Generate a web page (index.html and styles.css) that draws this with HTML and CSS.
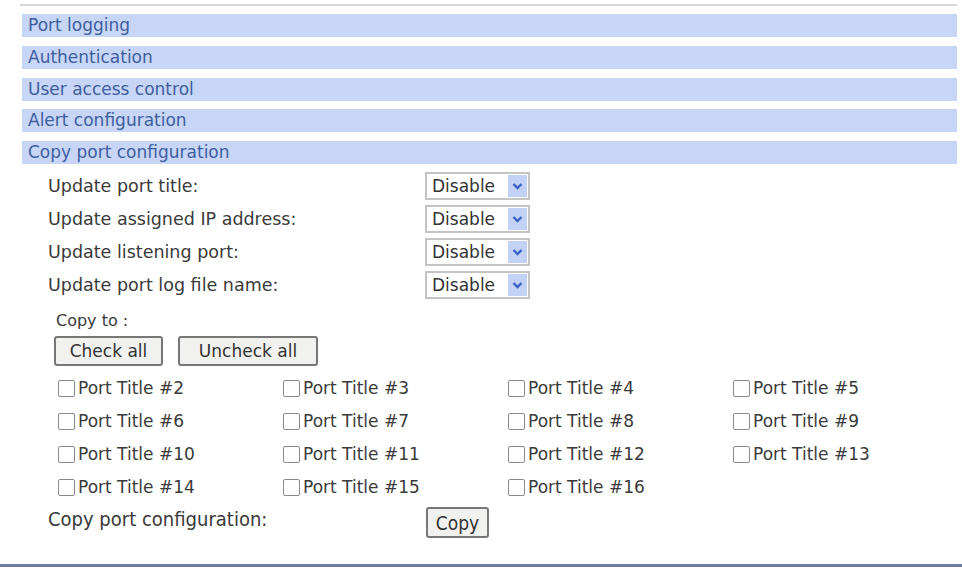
FILE: index.html
```html
<!DOCTYPE html>
<html lang="en">
<head>
  <meta charset="UTF-8">
  <title>Copy port configuration</title>
  <link rel="stylesheet" href="styles.css">
</head>
<body>

<div class="page">
  <!-- Section bars -->
  <div class="menu">
    <div class="bar">Port logging</div>
    <div class="bar">Authentication</div>
    <div class="bar">User access control</div>
    <div class="bar">Alert configuration</div>
    <div class="bar">Copy port configuration</div>
  </div>

  <!-- Copy options -->
  <div class="options">
    <div class="row">
      <span class="label">Update port title:</span>
      <span class="select">Disable<span class="arrow"><svg width="11" height="8" viewBox="0 0 11 8"><path d="M1.5 2 L5.5 6 L9.5 2" fill="none" stroke="#3a5fc4" stroke-width="2.4"/></svg></span></span>
    </div>
    <div class="row">
      <span class="label">Update assigned IP address:</span>
      <span class="select">Disable<span class="arrow"><svg width="11" height="8" viewBox="0 0 11 8"><path d="M1.5 2 L5.5 6 L9.5 2" fill="none" stroke="#3a5fc4" stroke-width="2.4"/></svg></span></span>
    </div>
    <div class="row">
      <span class="label">Update listening port:</span>
      <span class="select">Disable<span class="arrow"><svg width="11" height="8" viewBox="0 0 11 8"><path d="M1.5 2 L5.5 6 L9.5 2" fill="none" stroke="#3a5fc4" stroke-width="2.4"/></svg></span></span>
    </div>
    <div class="row">
      <span class="label">Update port log file name:</span>
      <span class="select">Disable<span class="arrow"><svg width="11" height="8" viewBox="0 0 11 8"><path d="M1.5 2 L5.5 6 L9.5 2" fill="none" stroke="#3a5fc4" stroke-width="2.4"/></svg></span></span>
    </div>
  </div>

  <div class="copy-to">Copy to :</div>

  <div class="buttons">
    <button class="btn check">Check all</button>
    <button class="btn uncheck">Uncheck all</button>
  </div>

  <div class="ports">
    <label class="port"><span class="box"></span>Port Title #2</label>
    <label class="port"><span class="box"></span>Port Title #3</label>
    <label class="port"><span class="box"></span>Port Title #4</label>
    <label class="port"><span class="box"></span>Port Title #5</label>
    <label class="port"><span class="box"></span>Port Title #6</label>
    <label class="port"><span class="box"></span>Port Title #7</label>
    <label class="port"><span class="box"></span>Port Title #8</label>
    <label class="port"><span class="box"></span>Port Title #9</label>
    <label class="port"><span class="box"></span>Port Title #10</label>
    <label class="port"><span class="box"></span>Port Title #11</label>
    <label class="port"><span class="box"></span>Port Title #12</label>
    <label class="port"><span class="box"></span>Port Title #13</label>
    <label class="port"><span class="box"></span>Port Title #14</label>
    <label class="port"><span class="box"></span>Port Title #15</label>
    <label class="port"><span class="box"></span>Port Title #16</label>
  </div>

  <div class="copy-row">
    <span class="copy-label">Copy port configuration:</span>
    <button class="btn copy">Copy</button>
  </div>
</div>

<div class="bottom-line"></div>

</body>
</html>
```

FILE: styles.css
```css
body {
  margin: 0;
  background-color: #ffffff;
  font-family: "DejaVu Sans", Verdana, sans-serif;
  color: #3a3a3a;
}

.page {
  height: 564px;
  padding: 4px 5px 0 20px;
  box-sizing: border-box;
}

.menu {
  border-top: 2px solid #d6d6d6;
  padding-top: 8px;
  padding-left: 2px;
  display: flex;
  flex-direction: column;
  gap: 8.75px;
}

.bar {
  height: 23px;
  line-height: 23px;
  background-color: #c7d5f7;
  color: #3f5e9e;
  font-size: 17px;
  padding-left: 6px;
}

.options {
  padding-left: 28px;
  padding-top: 8px;
  display: flex;
  flex-direction: column;
  gap: 6px;
}

.row {
  display: flex;
  align-items: center;
  height: 27px;
}

.label {
  width: 377px;
  font-size: 17.5px;
}

.select {
  display: flex;
  align-items: center;
  justify-content: space-between;
  width: 96px;
  height: 24px;
  border: 2px solid #c4c4c4;
  padding-left: 5px;
  font-size: 17px;
  color: #333333;
  background-color: #ffffff;
}

.arrow {
  display: flex;
  align-items: center;
  justify-content: center;
  width: 19px;
  height: 22px;
  margin-right: 1px;
  background-color: #c2d2f6;
}

.copy-to {
  padding-left: 36px;
  padding-top: 13px;
  font-size: 16px;
}

.buttons {
  display: flex;
  gap: 15px;
  padding-left: 34px;
  padding-top: 6px;
}

.btn {
  font-family: "DejaVu Sans", Verdana, sans-serif;
  font-size: 17px;
  color: #333333;
  background-color: #f1f1ef;
  border: 2px solid #777777;
  border-radius: 3px;
  height: 30px;
  padding: 0;
}

.check {
  width: 109px;
}

.uncheck {
  width: 140px;
}

.ports {
  display: grid;
  grid-template-columns: repeat(4, 225px);
  row-gap: 13px;
  padding-left: 38px;
  padding-top: 12px;
}

.port {
  display: flex;
  align-items: center;
  height: 20px;
  font-size: 17px;
}

.box {
  width: 15px;
  height: 15px;
  border: 1.5px solid #8a8a8a;
  border-radius: 2px;
  margin-right: 3px;
}

.copy-row {
  display: flex;
  align-items: flex-start;
  padding-left: 28px;
  padding-top: 10px;
}

.copy-label {
  width: 378px;
  font-family: "DejaVu Sans Condensed", "DejaVu Sans", sans-serif;
  font-size: 20px;
  line-height: 24px;
}

.copy {
  width: 63px;
  height: 31px;
  font-family: "DejaVu Sans Condensed", "DejaVu Sans", sans-serif;
  font-size: 19px;
}

.bottom-line {
  height: 3px;
  background-color: #6d7aa6;
}
```
